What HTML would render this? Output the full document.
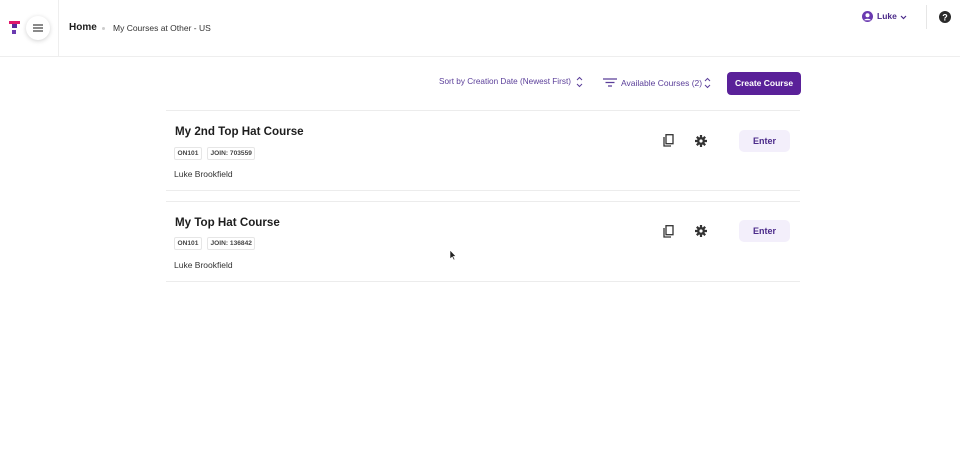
<!DOCTYPE html>
<html><head><style>
*{margin:0;padding:0;box-sizing:border-box}
body{width:960px;height:468px;background:#fff;font-family:"Liberation Sans",sans-serif;position:relative;overflow:hidden;color:#222}
.abs{position:absolute}
.hdr{position:absolute;left:0;top:0;width:960px;height:57px;border-bottom:1px solid #eee}
.tag{position:absolute;height:13px;border:1px solid #e6e6e6;border-radius:2px;font-size:6.6px;font-weight:bold;color:#444;line-height:11px;padding:0 2.5px}
.enter{position:absolute;width:51px;height:22px;background:#f3effb;border-radius:5px;color:#4b2a8a;font-size:9px;font-weight:bold;text-align:center;line-height:22px}
.title{position:absolute;font-size:11.6px;font-weight:bold;color:#1d1d1d}
.name{position:absolute;font-size:8.5px;color:#333}
.line{position:absolute;left:166px;width:634px;height:1px;background:#ececec}
</style></head><body>
<div class="hdr"></div>
<div class="abs" style="left:58px;top:0;width:1px;height:57px;background:#eee"></div>
<svg class="abs" style="left:9px;top:21px" width="11" height="14"><rect x="0" y="0" width="11" height="3" fill="#e0186c"/><rect x="3" y="3" width="5" height="4" fill="#5b2a9c"/><rect x="3" y="9" width="4" height="4" fill="#6a3ab0"/></svg>
<div class="abs" style="left:26px;top:16px;width:24px;height:24px;border-radius:50%;background:#fff;box-shadow:0 1px 5px rgba(0,0,0,.18)"></div>
<svg class="abs" style="left:33px;top:24px" width="10" height="8"><path d="M0 1H10M0 4H10M0 7H10" stroke="#444" stroke-width="1.2"/></svg>
<div class="abs" style="left:69px;top:22px;font-size:10px;font-weight:bold;color:#1d1d1d">Home</div>
<div class="abs" style="left:102px;top:27px;width:3px;height:3px;border-radius:50%;background:#ccc"></div>
<div class="abs" style="left:113px;top:23px;font-size:8.5px;color:#333">My Courses at Other - US</div>
<svg class="abs" style="left:862px;top:11px" width="11" height="11"><circle cx="5.5" cy="5.5" r="5.5" fill="#6a3ab0"/><circle cx="5.5" cy="4.2" r="2" fill="#fff"/><path d="M2 9.2c1-2 6-2 7 0" fill="#fff"/></svg>
<div class="abs" style="left:877px;top:11px;font-size:8.5px;font-weight:bold;color:#4b2a8a">Luke</div>
<svg class="abs" style="left:900px;top:15px" width="7" height="5"><path d="M1 1l2.5 2.5L6 1" stroke="#4b2a8a" stroke-width="1.2" fill="none"/></svg>
<div class="abs" style="left:926px;top:5px;width:1px;height:24px;background:#e6e6e6"></div>
<svg class="abs" style="left:939px;top:11px" width="12" height="12"><circle cx="6" cy="6" r="6" fill="#2a2a2a"/><text x="6" y="9.5" font-size="9" font-weight="bold" fill="#fff" text-anchor="middle" font-family="Liberation Sans">?</text></svg>
<div class="abs" style="left:439px;top:77px;font-size:8.2px;color:#5a3e99">Sort by Creation Date (Newest First)</div>
<svg class="abs" style="left:576px;top:76px" width="7" height="12"><path d="M1 4l2.5-2.5L6 4M1 8l2.5 2.5L6 8" stroke="#5a3e99" stroke-width="1" fill="none"/></svg>
<svg class="abs" style="left:603px;top:78px" width="14" height="9"><path d="M0 1H14M2.5 4.5H11.5M5 8H9" stroke="#5a3e99" stroke-width="1.2"/></svg>
<div class="abs" style="left:621px;top:78px;font-size:8.5px;color:#5a3e99">Available Courses (2)</div>
<svg class="abs" style="left:704px;top:77px" width="7" height="12"><path d="M1 4l2.5-2.5L6 4M1 8l2.5 2.5L6 8" stroke="#5a3e99" stroke-width="1" fill="none"/></svg>
<div class="abs" style="left:727px;top:72px;width:74px;height:23px;background:#5a2199;border-radius:4px;color:#fff;font-size:8.5px;font-weight:bold;text-align:center;line-height:23px">Create Course</div>
<div class="line" style="top:110px"></div>
<div class="line" style="top:190px"></div>
<div class="line" style="top:201px"></div>
<div class="line" style="top:281px"></div>

<div class="title" style="left:175px;top:125px">My 2nd Top Hat Course</div>
<div class="tag" style="left:174px;top:147px">ON101</div>
<div class="tag" style="left:207px;top:147px">JOIN: 703559</div>
<div class="name" style="left:174px;top:169px">Luke Brookfield</div>
<div class="title" style="left:175px;top:216px">My Top Hat Course</div>
<div class="tag" style="left:174px;top:237px">ON101</div>
<div class="tag" style="left:207px;top:237px">JOIN: 136842</div>
<div class="name" style="left:174px;top:260px">Luke Brookfield</div>

<svg class="abs" style="left:663px;top:134px" width="11" height="13"><rect x="3" y="0.7" width="7" height="9" fill="none" stroke="#333" stroke-width="1.3"/><path d="M1 3v9h7" fill="none" stroke="#333" stroke-width="1.3"/></svg>
<svg class="abs" style="left:663px;top:225px" width="11" height="13"><rect x="3" y="0.7" width="7" height="9" fill="none" stroke="#333" stroke-width="1.3"/><path d="M1 3v9h7" fill="none" stroke="#333" stroke-width="1.3"/></svg>
<svg class="abs" style="left:695px;top:135px" width="12" height="12"><g fill="#333"><circle cx="6" cy="6" r="4"/><g stroke="#333" stroke-width="2.2"><path d="M6 0v12M0 6h12M1.8 1.8l8.4 8.4M10.2 1.8l-8.4 8.4"/></g></g><circle cx="6" cy="6" r="1.6" fill="#fff"/></svg>
<svg class="abs" style="left:695px;top:225px" width="12" height="12"><g fill="#333"><circle cx="6" cy="6" r="4"/><g stroke="#333" stroke-width="2.2"><path d="M6 0v12M0 6h12M1.8 1.8l8.4 8.4M10.2 1.8l-8.4 8.4"/></g></g><circle cx="6" cy="6" r="1.6" fill="#fff"/></svg>
<div class="enter" style="left:739px;top:130px">Enter</div>
<div class="enter" style="left:739px;top:220px">Enter</div>
<svg class="abs" style="left:449px;top:249px" width="8" height="12"><path d="M1 1v9l2.2-2 1.5 3 1.2-.6-1.5-3H7z" fill="#222" stroke="#fff" stroke-width=".6"/></svg>
</body></html>
